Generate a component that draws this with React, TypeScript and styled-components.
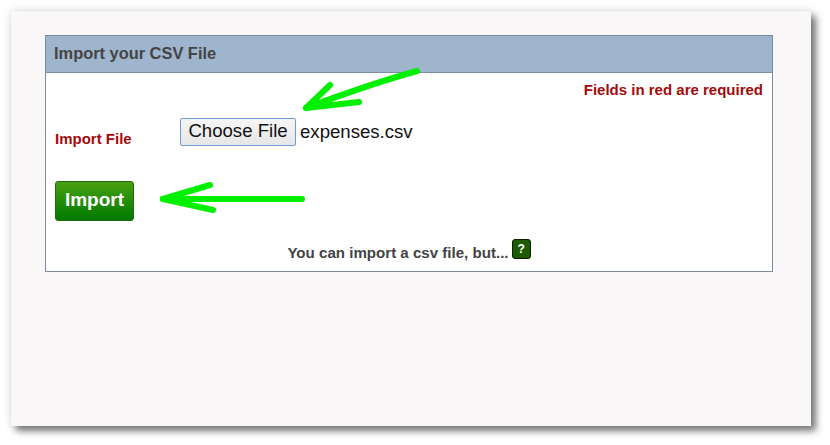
import React from 'react';
import styled, { createGlobalStyle } from 'styled-components';

const GlobalStyle = createGlobalStyle`
  html, body {
    margin: 0;
    padding: 0;
    background: #ffffff;
    font-family: "Liberation Sans", Arial, sans-serif;
  }
`;

const Page = styled.div`
  position: relative;
  width: 830px;
  height: 445px;
  padding: 11px 0 0 11px;
  box-sizing: border-box;
  overflow: hidden;
`;

const Sheet = styled.div`
  width: 800px;
  height: 415px;
  box-sizing: border-box;
  padding: 24px 38px 0 34px;
  background: #f9f7f8;
  box-shadow: 0 0 9px rgba(0, 0, 0, 0.14), 5px 5px 7px rgba(0, 0, 0, 0.5);
`;

const Panel = styled.section`
  width: 728px;
  height: 237px;
  box-sizing: border-box;
  background: #ffffff;
  border: 1px solid #7f8b9a;
  display: flex;
  flex-direction: column;
`;

const PanelHeader = styled.h2`
  margin: 0;
  height: 37px;
  box-sizing: border-box;
  padding: 0 0 2px 8px;
  display: flex;
  align-items: center;
  background: #9fb5cd;
  border-bottom: 1px solid #7a8da3;
  color: #444444;
  font-size: 16.4px;
  font-weight: bold;
`;

const PanelBody = styled.div`
  flex: 1;
  display: flex;
  flex-direction: column;
  padding: 8px 9px 0 9px;
`;

const RequiredNote = styled.div`
  text-align: right;
  color: #a50a0a;
  font-size: 15px;
  font-weight: bold;
  line-height: 18px;
`;

const FileRow = styled.div`
  display: flex;
  align-items: center;
  margin-top: 17px;
`;

const FieldLabel = styled.label`
  width: 125px;
  padding-top: 14px;
  color: #a50a0a;
  font-size: 15px;
  font-weight: bold;
`;

const ChooseButton = styled.button`
  width: 116px;
  height: 28px;
  padding: 0 0 2px;
  box-sizing: border-box;
  border: 1px solid #6f9bd8;
  border-radius: 2px;
  background: linear-gradient(#f6f6f6, #e6e6e6);
  color: #111111;
  font-family: inherit;
  font-size: 18.6px;
`;

const FileName = styled.span`
  margin-left: 4px;
  color: #111111;
  font-size: 18.6px;
`;

const ImportButton = styled.button`
  align-self: flex-start;
  margin-top: 34px;
  width: 79px;
  height: 40px;
  padding: 0 0 2px;
  border: 1px solid #1f6b0c;
  border-radius: 3px;
  background: linear-gradient(#48a012, #007a00);
  color: #ffffff;
  font-family: inherit;
  font-size: 19px;
  font-weight: bold;
`;

const HelpLine = styled.div`
  margin-top: 18px;
  display: flex;
  justify-content: center;
  align-items: flex-start;
  gap: 3px;
  color: #444444;
  font-size: 15.1px;
  font-weight: bold;
`;

const HelpText = styled.span`
  padding-top: 5px;
`;

const HelpBadge = styled.span`
  width: 19px;
  height: 20px;
  box-sizing: border-box;
  display: flex;
  align-items: center;
  justify-content: center;
  background: #1d5a00;
  border: 1px solid #0c1c04;
  border-radius: 3px;
  color: #ffffff;
  font-size: 12px;
  font-weight: bold;
`;

const Arrow = styled.svg`
  position: absolute;
  left: 0;
  top: 0;
  pointer-events: none;
`;

export default function App() {
  return (
    <Page>
      <GlobalStyle />
      <Sheet>
        <Panel>
          <PanelHeader>Import your CSV File</PanelHeader>
          <PanelBody>
            <RequiredNote>Fields in red are required</RequiredNote>
            <FileRow>
              <FieldLabel>Import File</FieldLabel>
              <ChooseButton type="button">Choose File</ChooseButton>
              <FileName>expenses.csv</FileName>
            </FileRow>
            <ImportButton type="button">Import</ImportButton>
            <HelpLine>
              <HelpText>You can import a csv file, but...</HelpText>
              <HelpBadge>?</HelpBadge>
            </HelpLine>
          </PanelBody>
        </Panel>
      </Sheet>
      <Arrow width="830" height="445" viewBox="0 0 830 445">
        <g fill="none" stroke="#00f000" strokeWidth="6" strokeLinecap="round" strokeLinejoin="round">
          <path d="M417 71 Q370 84 306 108 L359 102" />
          <path d="M306 108 L330 85" />
          <path d="M302 199 L163 199" />
          <path d="M163 199 L210 185" />
          <path d="M163 199 L213 210" />
        </g>
      </Arrow>
    </Page>
  );
}
